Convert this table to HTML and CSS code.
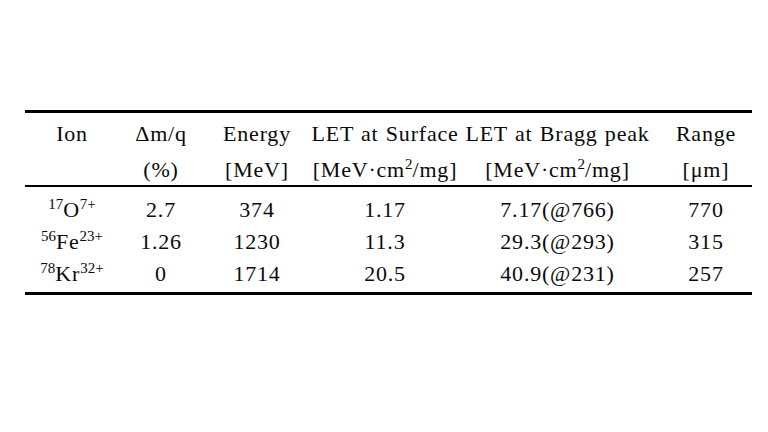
FILE: index.html
```html
<html>
<head>
    <meta charset="utf-8">
    <link rel="stylesheet" href="styles.css">
</head>
<body>
    <div class="page">
        <table class="ions">
            <colgroup>
                <col class="c-ion">
                <col class="c-dm">
                <col class="c-en">
                <col class="c-surf">
                <col class="c-bragg">
                <col class="c-range">
            </colgroup>
            <thead>
                <tr class="head-top">
                    <th>Ion</th>
                    <th>&Delta;m/q</th>
                    <th>Energy</th>
                    <th>LET at Surface</th>
                    <th>LET at Bragg peak</th>
                    <th class="range">Range</th>
                </tr>
                <tr class="head-unit">
                    <th></th>
                    <th>(%)</th>
                    <th>[MeV]</th>
                    <th>[MeV&middot;cm<sup>2</sup>/mg]</th>
                    <th>[MeV&middot;cm<sup>2</sup>/mg]</th>
                    <th class="range">[&mu;m]</th>
                </tr>
            </thead>
            <tbody>
                <tr>
                    <td><sup>17</sup>O<sup>7+</sup></td>
                    <td>2.7</td>
                    <td>374</td>
                    <td>1.17</td>
                    <td>7.17(@766)</td>
                    <td class="range">770</td>
                </tr>
                <tr>
                    <td><sup>56</sup>Fe<sup>23+</sup></td>
                    <td>1.26</td>
                    <td>1230</td>
                    <td>11.3</td>
                    <td>29.3(@293)</td>
                    <td class="range">315</td>
                </tr>
                <tr>
                    <td><sup>78</sup>Kr<sup>32+</sup></td>
                    <td>0</td>
                    <td>1714</td>
                    <td>20.5</td>
                    <td>40.9(@231)</td>
                    <td class="range">257</td>
                </tr>
            </tbody>
        </table>
    </div>
</body>
</html>
```

FILE: styles.css
```css
html, body {
    margin: 0;
    padding: 0;
    background-color: #fff;
}
.page {
    padding: 110px 0 0 25px;
}
table.ions {
    width: 727px;
    table-layout: fixed;
    border-collapse: collapse;
    border-top: 3px solid #000;
    border-bottom: 3px solid #000;
    font-family: "Liberation Serif", "Times New Roman", serif;
    font-size: 22px;
    letter-spacing: 0.8px;
    word-spacing: 1px;
    color: #0a0a0a;
}
.c-ion { width: 94px; }
.c-dm { width: 84px; }
.c-en { width: 108px; }
.c-surf { width: 148px; }
.c-bragg { width: 197px; }
.c-range { width: 96px; }

th, td {
    padding: 0;
    text-align: center;
    font-weight: normal;
    white-space: nowrap;
}
th.range, td.range {
    padding-left: 4px;
}
.head-top th {
    line-height: 36px;
    padding-top: 3px;
    padding-bottom: 3px;
}
.head-unit th {
    line-height: 30px;
    border-bottom: 2px solid #000;
}
tbody td {
    line-height: 32px;
}
tbody tr:first-child td {
    padding-top: 7px;
}
tbody tr:last-child td {
    padding-bottom: 2px;
}
sup {
    font-size: 15px;
    letter-spacing: 0;
    line-height: 0;
    vertical-align: 8px;
}
```
